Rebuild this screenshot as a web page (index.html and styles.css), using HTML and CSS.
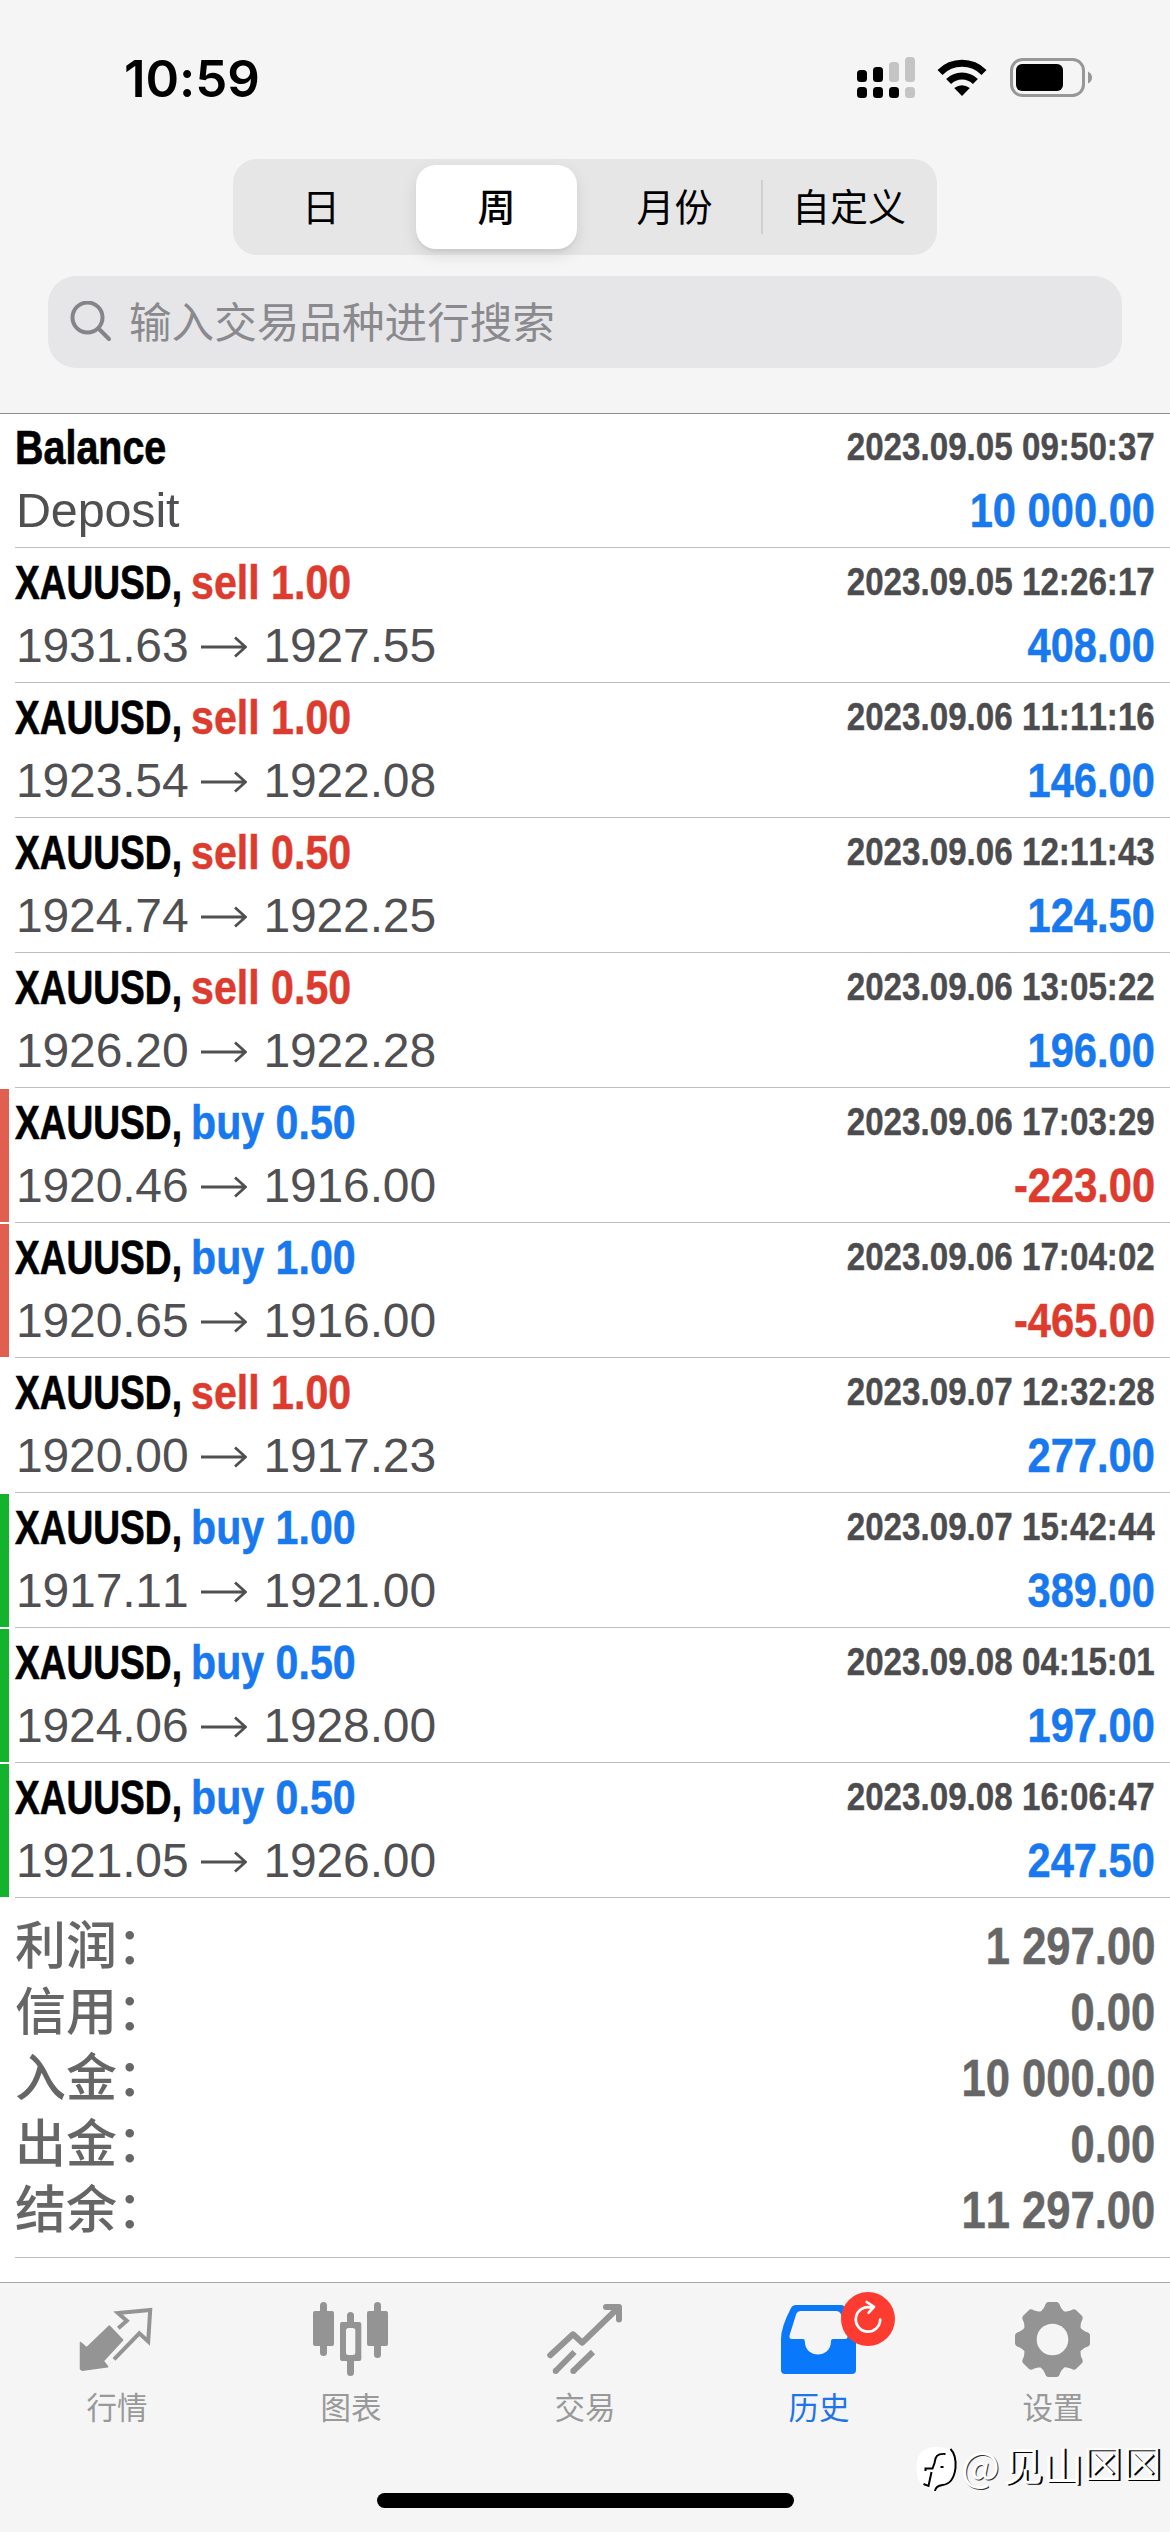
FILE: index.html
```html
<!DOCTYPE html>
<html lang="zh-CN">
<head>
<meta charset="utf-8">
<title>历史</title>
<link rel="stylesheet" href="styles.css">
</head>
<body>
<div class="screen">
  <header class="header">
    <div class="status">
      <span class="clock">10:59</span>
      <div class="indicators">
        <svg class="signal" width="58" height="42" viewBox="0 0 58 42">
          <g fill="#000"><rect x="0" y="13" width="10" height="12" rx="3.5"/><rect x="16" y="10" width="10" height="15" rx="3.5"/><rect x="0" y="30" width="10" height="11" rx="3.5"/><rect x="16" y="30" width="10" height="11" rx="3.5"/><rect x="32" y="30" width="10" height="11" rx="3.5"/></g>
          <g fill="#c4c4c4"><rect x="32" y="5" width="10" height="20" rx="3.5"/><rect x="48" y="0" width="10" height="25" rx="3.5"/><rect x="48" y="30" width="10" height="11" rx="3.5"/></g>
        </svg>
        <svg class="wifi" width="50" height="38" viewBox="0 0 50 38">
          <path d="M3 13.5A31 31 0 0 1 47 13.5" fill="none" stroke="#000" stroke-width="7"/>
          <path d="M11.6 22.6A19 19 0 0 1 38.4 22.6" fill="none" stroke="#000" stroke-width="7"/>
          <path d="M25 37L17.2 29Q25 23.400 32.800 29Z" fill="#000"/>
        </svg>
        <svg class="battery" width="82" height="40" viewBox="0 0 82 40">
          <rect x="1.500" y="1.500" width="72" height="36" rx="11" fill="none" stroke="#979797" stroke-width="3"/>
          <rect x="6" y="6" width="47" height="27" rx="6" fill="#000"/>
          <path d="M78 13.500Q82 15.500 82 19.500T78 25.500Z" fill="#979797"/>
        </svg>
      </div>
    </div>
    <nav class="segments">
      <span class="segment">日</span>
      <span class="segment selected">周</span>
      <span class="segment">月份</span>
      <span class="segment divided">自定义</span>
    </nav>
    <div class="search">
      <svg width="42" height="42" viewBox="0 0 42 42" fill="none" stroke="#858589" stroke-width="4" stroke-linecap="round"><circle cx="17.500" cy="16.500" r="15"/><path d="M28.500 27.500L39 38"/></svg>
      <span>输入交易品种进行搜索</span>
    </div>
  </header>

  <svg width="0" height="0" class="defs"><defs>
    <symbol id="arrow" viewBox="0 0 46 22"><path d="M0 11H44M34 1.500L44.500 11L34 20.500" fill="none" stroke="#505052" stroke-width="2.800"/></symbol>
  </defs></svg>

  <main class="history">
    <section class="row">
      <div class="line"><span class="name balance">Balance</span><span class="time">2023.09.05 09:50:37</span></div>
      <div class="line second"><span class="comment">Deposit</span><span class="amount">10 000.00</span></div>
    </section>
    <section class="row">
      <div class="line"><span class="name">XAUUSD,</span><span class="side sell">sell 1.00</span><span class="time">2023.09.05 12:26:17</span></div>
      <div class="line second"><span class="price">1931.63</span><svg class="arrow"><use href="#arrow"/></svg><span class="price">1927.55</span><span class="amount">408.00</span></div>
    </section>
    <section class="row">
      <div class="line"><span class="name">XAUUSD,</span><span class="side sell">sell 1.00</span><span class="time">2023.09.06 11:11:16</span></div>
      <div class="line second"><span class="price">1923.54</span><svg class="arrow"><use href="#arrow"/></svg><span class="price">1922.08</span><span class="amount">146.00</span></div>
    </section>
    <section class="row">
      <div class="line"><span class="name">XAUUSD,</span><span class="side sell">sell 0.50</span><span class="time">2023.09.06 12:11:43</span></div>
      <div class="line second"><span class="price">1924.74</span><svg class="arrow"><use href="#arrow"/></svg><span class="price">1922.25</span><span class="amount">124.50</span></div>
    </section>
    <section class="row">
      <div class="line"><span class="name">XAUUSD,</span><span class="side sell">sell 0.50</span><span class="time">2023.09.06 13:05:22</span></div>
      <div class="line second"><span class="price">1926.20</span><svg class="arrow"><use href="#arrow"/></svg><span class="price">1922.28</span><span class="amount">196.00</span></div>
    </section>
    <section class="row stop">
      <div class="line"><span class="name">XAUUSD,</span><span class="side buy">buy 0.50</span><span class="time">2023.09.06 17:03:29</span></div>
      <div class="line second"><span class="price">1920.46</span><svg class="arrow"><use href="#arrow"/></svg><span class="price">1916.00</span><span class="amount loss">-223.00</span></div>
    </section>
    <section class="row stop">
      <div class="line"><span class="name">XAUUSD,</span><span class="side buy">buy 1.00</span><span class="time">2023.09.06 17:04:02</span></div>
      <div class="line second"><span class="price">1920.65</span><svg class="arrow"><use href="#arrow"/></svg><span class="price">1916.00</span><span class="amount loss">-465.00</span></div>
    </section>
    <section class="row">
      <div class="line"><span class="name">XAUUSD,</span><span class="side sell">sell 1.00</span><span class="time">2023.09.07 12:32:28</span></div>
      <div class="line second"><span class="price">1920.00</span><svg class="arrow"><use href="#arrow"/></svg><span class="price">1917.23</span><span class="amount">277.00</span></div>
    </section>
    <section class="row take">
      <div class="line"><span class="name">XAUUSD,</span><span class="side buy">buy 1.00</span><span class="time">2023.09.07 15:42:44</span></div>
      <div class="line second"><span class="price">1917.11</span><svg class="arrow"><use href="#arrow"/></svg><span class="price">1921.00</span><span class="amount">389.00</span></div>
    </section>
    <section class="row take">
      <div class="line"><span class="name">XAUUSD,</span><span class="side buy">buy 0.50</span><span class="time">2023.09.08 04:15:01</span></div>
      <div class="line second"><span class="price">1924.06</span><svg class="arrow"><use href="#arrow"/></svg><span class="price">1928.00</span><span class="amount">197.00</span></div>
    </section>
    <section class="row take">
      <div class="line"><span class="name">XAUUSD,</span><span class="side buy">buy 0.50</span><span class="time">2023.09.08 16:06:47</span></div>
      <div class="line second"><span class="price">1921.05</span><svg class="arrow"><use href="#arrow"/></svg><span class="price">1926.00</span><span class="amount">247.50</span></div>
    </section>
    <section class="summary">
      <div class="total"><span class="label">利润：</span><span class="value">1 297.00</span></div>
      <div class="total"><span class="label">信用：</span><span class="value">0.00</span></div>
      <div class="total"><span class="label">入金：</span><span class="value">10 000.00</span></div>
      <div class="total"><span class="label">出金：</span><span class="value">0.00</span></div>
      <div class="total"><span class="label">结余：</span><span class="value">11 297.00</span></div>
    </section>
  </main>

  <footer class="tabbar">
    <div class="tab">
      <svg viewBox="0 0 80 80"><path d="M32.300 27L45.700 41L26.300 62L30.700 67.700L5 71.200L3.500 70V43.500L9.700 48.800Z" fill="#949494" stroke="#949494" stroke-width="1.500" stroke-linejoin="round"/><path d="M41.300 29.300L49.800 21.700L41 14L73.200 11L71.200 42.500L62.300 34.300L37 60.300" fill="none" stroke="#949494" stroke-width="4"/></svg>
      <span>行情</span>
    </div>
    <div class="tab">
      <svg viewBox="0 0 80 80" fill="#949494"><rect x="2" y="12" width="21" height="35" rx="2"/><rect x="9" y="3" width="7" height="54" rx="3.500"/><rect x="56" y="12" width="21" height="35" rx="2"/><rect x="63" y="3" width="7" height="56" rx="3.500"/><path fill-rule="evenodd" d="M31 23H36V16.500A3.500 3.500 0 0 1 43 16.500V23H48.300A2 2 0 0 1 50.300 25V60A2 2 0 0 1 48.300 62H43V73.500A3.500 3.500 0 0 1 36 73.500V62H31A2 2 0 0 1 29 60V25A2 2 0 0 1 31 23ZM37.500 29A2.500 2.500 0 0 0 35 31.500V53.500A2.500 2.500 0 0 0 37.500 56H41.800A2.500 2.500 0 0 0 44.300 53.500V31.500A2.500 2.500 0 0 0 41.800 29Z"/></svg>
      <span>图表</span>
    </div>
    <div class="tab">
      <svg viewBox="0 0 80 80" fill="none" stroke="#949494" stroke-width="6" stroke-linejoin="round"><path stroke-linecap="round" d="M5.300 56.300L28 35.300L37.300 43.700L73 9M61 8H74V20.500"/><path d="M10.700 72L29.500 53M28.300 72L48 53"/><g fill="#949494" stroke="none"><circle cx="10.700" cy="72" r="3"/><circle cx="28.300" cy="72" r="3"/></g></svg>
      <span>交易</span>
    </div>
    <div class="tab active">
      <svg viewBox="0 0 80 80"><path fill-rule="evenodd" fill="#0a78fb" d="M17 6H62Q65 6 66.500 9Q77 28 77 40V71A4 4 0 0 1 73 75H6A4 4 0 0 1 2 71V40Q2 28 12 9Q13.500 6 17 6ZM21.500 12Q18.500 12 17.400 14.500L10.800 35.500Q9.500 40 13 40H24Q25.800 40 25.800 42C25.800 60 52 60 52 42Q52 40 54 40H66Q69.500 40 68.200 35.500L61.600 14.500Q60.500 12 57.500 12Z"/><circle cx="89" cy="20" r="27" fill="#fe3b30"/><path d="M92 8.600A12.200 12.200 0 1 0 101.200 20.500M87.700 3L95 7.900L89.700 13.700" fill="none" stroke="#fff" stroke-width="2.700" stroke-linecap="round" stroke-linejoin="round"/></svg>
      <span>历史</span>
    </div>
    <div class="tab">
      <svg viewBox="0 0 80 80" fill="#949494"><defs><path id="tooth" d="M-13 -26C-10.500 -30 -9 -30 -7.500 -34Q-6.500 -37.500 -4 -37.500H4Q6.500 -37.500 7.500 -34C9 -30 10.500 -30 13 -26Z"/></defs><g transform="translate(39.500 40.500)"><circle r="30"/><use href="#tooth"/><use href="#tooth" transform="rotate(45)"/><use href="#tooth" transform="rotate(90)"/><use href="#tooth" transform="rotate(135)"/><use href="#tooth" transform="rotate(180)"/><use href="#tooth" transform="rotate(225)"/><use href="#tooth" transform="rotate(270)"/><use href="#tooth" transform="rotate(315)"/><circle r="15.800" fill="#f5f5f5"/></g></svg>
      <span>设置</span>
    </div>
  </footer>
  <div class="home"></div>
  <div class="watermark">
    <svg width="47" height="50" viewBox="0 0 44 50"><path d="M10 42C2 38 1 30 1 22C1 8 8 2 21 2S41 8 41 22S34 40 22 42Q18 45 19 47" fill="#fff"/><path d="M35 4Q41 10 40 23Q38 39 27 40Q20 41 19.500 46M30 9C20 8 20 13 19 18L17 23.500H10V26M28 22H25M16 27L13 41L8 39" fill="none" stroke="#000" stroke-width="2"/></svg>
    <span class="at">@</span><span>见山</span><span class="box">☒☒</span>
  </div>
</div>
</body>
</html>
```
FILE: styles.css
```css
* { box-sizing: border-box; }
body { margin: 0; background: #fff; font-family: "Liberation Sans", "Noto Sans CJK SC", sans-serif; font-kerning: none; }
svg { display: block; flex: none; }
.defs { position: absolute; }
.screen { position: relative; width: 1170px; height: 2532px; display: flex; flex-direction: column; overflow: hidden; }

.header { height: 413px; flex: none; background: #f5f5f5; box-shadow: 0 1px 0 #8e8e90; display: flex; flex-direction: column; align-items: center; }
.status { width: 100%; height: 159px; padding: 57px 78px 0 124px; display: flex; justify-content: space-between; align-items: flex-start; }
.clock { font: 600 51px/44px Inter, "Liberation Sans", sans-serif; letter-spacing: -0.1px; }
.indicators { display: flex; align-items: flex-start; }
.wifi { margin: 2px 0 0 22px; }
.battery { margin: 1px 0 0 23px; }
.segments { width: 704px; height: 96px; background: #e6e6e6; border-radius: 24px; display: grid; grid-template-columns: repeat(4, 1fr); align-items: center; font: 400 38px/80px "Noto Sans CJK SC", sans-serif; color: #000; }
.segment { text-align: center; height: 84px; }
.segment:nth-child(3) { padding-left: 3px; }
.selected { margin: 0 8px 0 7px; background: #fff; border-radius: 20px; font-weight: 500; box-shadow: 0 6px 16px rgba(0,0,0,.1), 0 3px 2px rgba(0,0,0,.04); }
.divided { background: linear-gradient(#cfcfd1, #cfcfd1) 0 50% / 2px 54px no-repeat; }
.search { width: 1074px; height: 92px; margin-top: 21px; padding: 0 22px; border-radius: 28px; background: #e6e6e8; display: flex; align-items: center; gap: 17px; font: 400 42.600px/88px "Noto Sans CJK SC", sans-serif; color: #8a8a8e; }
.search span { height: 92px; }

.history { flex: none; }
.row { position: relative; height: 135px; padding: 0 15px 7px 16px; }
.row::after, .summary::after { content: ""; position: absolute; left: 15px; right: 0; bottom: 0; height: 1px; background: #bebec0; }
.stop { background: linear-gradient(#e05f4f, #e05f4f) 0 1px / 9px 133px no-repeat; }
.take { background: linear-gradient(#14b32d, #14b32d) 0 1px / 9px 133px no-repeat; }
.line { height: 68px; line-height: 68px; display: flex; white-space: nowrap; font-size: 49px; }
.second { height: 60px; line-height: 60px; }
.name { width: 176px; margin-left: -1px; font-weight: 700; transform: scaleX(.757); transform-origin: 0 50%; color: #000; -webkit-text-stroke: .7px; }
.balance { transform: scaleX(.805); }
.side { width: 170px; font-weight: 700; transform: scaleX(.84); transform-origin: 0 50%; -webkit-text-stroke: .5px; }
.sell { color: #dc3b2e; }
.buy { color: #1878ee; }
.time { margin-left: auto; font-weight: 700; font-size: 39.500px; line-height: 67px; color: #4c4c4e; transform: scaleX(.84); transform-origin: 100% 50%; -webkit-text-stroke: .4px; }
.comment, .price { font-size: 48px; color: #505052; letter-spacing: -.15px; }
.comment { transform: scaleX(1.01); transform-origin: 0 50%; }
.arrow { width: 46px; height: 22px; margin: 20px 16px 0 13px; }
.amount { margin-left: auto; font-weight: 700; color: #1878ee; transform: scaleX(.85); transform-origin: 100% 50%; line-height: 59px; -webkit-text-stroke: .5px; }
.loss { color: #dc3b2e; }
.summary { position: relative; height: 360px; padding: 15px 15px 0 16px; color: #666; }
.total { height: 66px; line-height: 66px; display: flex; justify-content: space-between; }
.label { margin-left: -1px; padding-top: 1px; font-weight: 500; font-size: 51px; }
.value { font-weight: 700; font-size: 52px; transform: scaleX(.838); transform-origin: 100% 50%; -webkit-text-stroke: .5px; }

.tabbar { height: 250px; margin-top: auto; background: #f5f5f5; border-top: 1px solid #a8a8aa; display: grid; grid-template-columns: repeat(5, 1fr); }
.tab { padding-top: 16px; display: flex; flex-direction: column; align-items: center; gap: 7px; color: #999; font: 400 30.500px/40px "Noto Sans CJK SC", sans-serif; }
.tab svg { width: 80px; height: 80px; overflow: visible; }
.active { color: #1f74ea; }
.home { position: absolute; left: 377px; top: 2493px; width: 417px; height: 15px; border-radius: 8px; background: #000; }
.watermark { position: absolute; left: 914px; top: 2445px; height: 50px; display: flex; color: #fff; font: 400 40px/38px "Noto Sans CJK SC", sans-serif; text-shadow: 2px 1px 0 #000; white-space: nowrap; }
.at { width: 42px; font-size: 41px; text-shadow: 1px 1px 0 #333; }
.box { font: 44px/40px "DejaVu Sans", sans-serif; }
```
